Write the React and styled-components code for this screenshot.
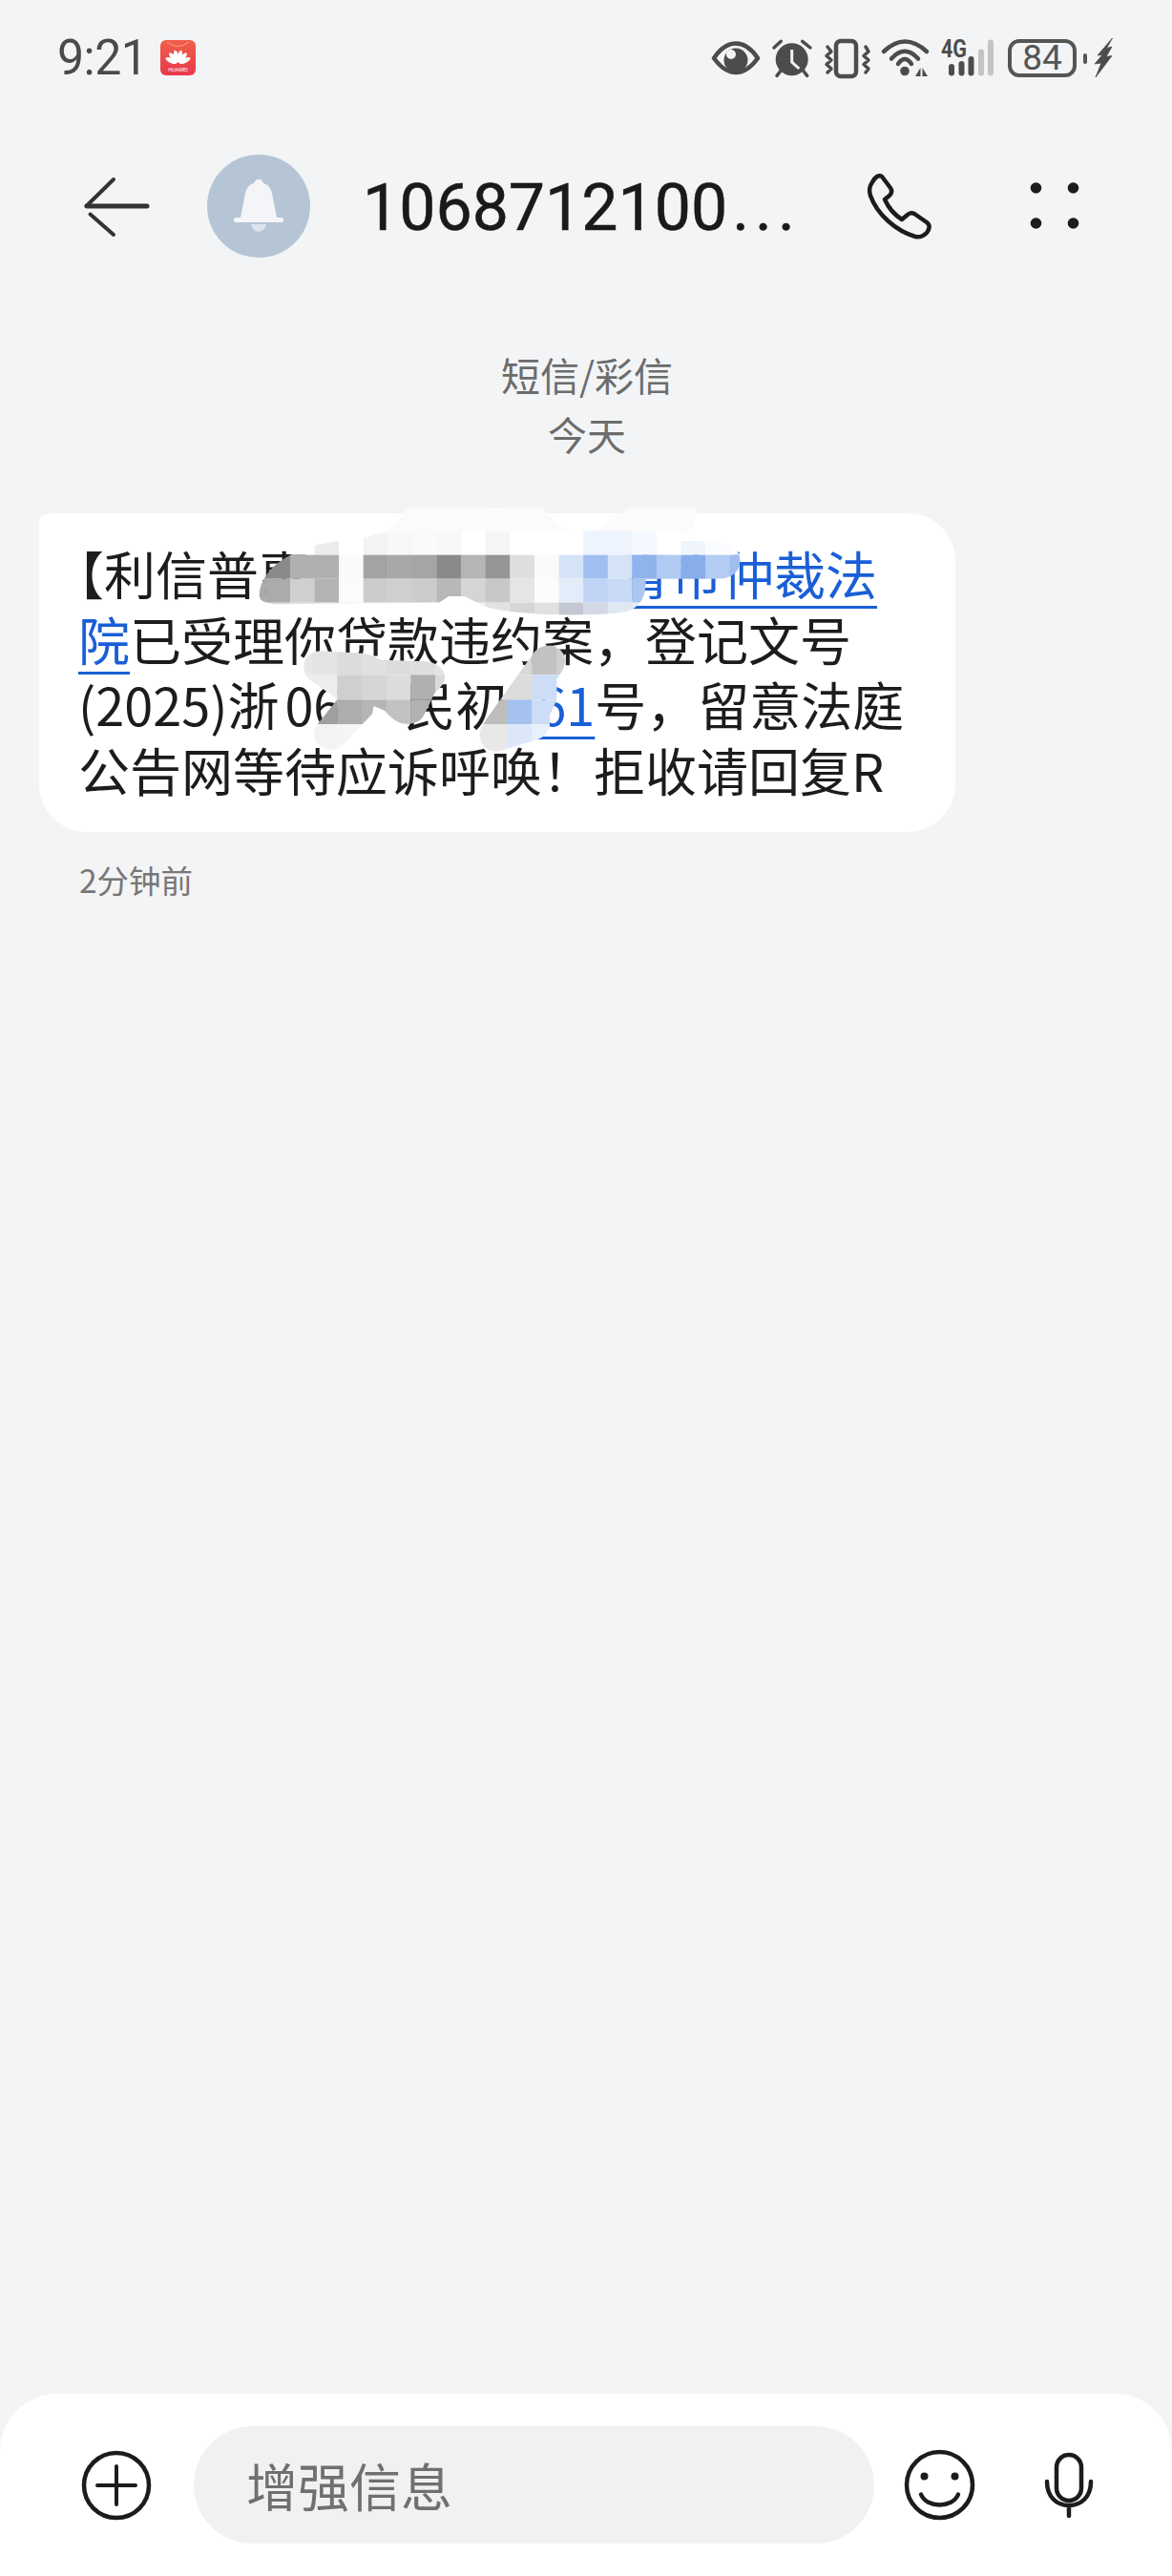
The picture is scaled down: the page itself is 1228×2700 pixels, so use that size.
import React from "react";
import styled, { createGlobalStyle } from "styled-components";

const Global = createGlobalStyle`
  html, body { margin: 0; padding: 0; background: #f3f4f6; }
  body { font-family: "Noto Sans CJK SC", "Noto Sans", sans-serif; }
`;
const Page = styled.div`
  width: 1228px; height: 2700px; display: flex; flex-direction: column;
  background: #f3f4f6; overflow: hidden;
`;
const StatusBar = styled.div`
  display: flex; align-items: center; height: 41px; padding: 40px 62px 0 60px;
`;
const Time = styled.span`
  font-family: Roboto, sans-serif; font-size: 50px; line-height: 41px; color: #4a4a4a;
  letter-spacing: -0.5px; width: 108px; transform: scaleY(1.04);
`;
const StatusIcons = styled.div`
  display: flex; align-items: center; gap: 12px; margin-left: auto;
`;
const Glyph = styled.svg`
  display: block; flex: none; overflow: visible;
`;
const BatteryGroup = styled.div`
  display: flex; align-items: center; gap: 9px; margin-left: 2px;
`;
const Battery = styled.div`
  position: relative; box-sizing: border-box; width: 72px; height: 40px; margin-right: 10px;
  border: 4px solid #555; border-radius: 12px; display: flex; align-items: center; justify-content: center;
  font-family: Roboto, sans-serif; font-size: 37px; line-height: 32px; color: #555;
  &::after {
    content: ""; position: absolute; right: -15px; top: 11px; width: 4px; height: 11px;
    background: #555; border-radius: 2px;
  }
`;
const Header = styled.header`
  display: flex; align-items: center; height: 108px; margin-top: 81px; padding-left: 85px;
`;
const Avatar = styled.div`
  width: 108px; height: 108px; border-radius: 50%; background: #b5c5d5; margin-left: 57px; flex: none;
  display: flex; align-items: center; justify-content: center;
`;
const Title = styled.h1`
  margin: 3px 0 0 55px; width: 529px; flex: none; font-family: Roboto, sans-serif; font-weight: 400;
  font-size: 68px; line-height: 108px; color: #1a1a1a; white-space: nowrap;
  -webkit-text-stroke: 0.5px #1a1a1a;
`;
const Dots = styled.span`
  letter-spacing: 6px; margin-left: 5px;
`;
const MoreGap = styled.div`
  margin-left: 103px;
`;
const Channel = styled.div`
  margin-top: 91px; text-align: center; font-size: 41px; line-height: 62px; color: #6c6c6c; padding-left: 2px;
`;
const Bubble = styled.div`
  position: relative; box-sizing: border-box; width: 960px; height: 334px; margin: 53px 0 0 41px;
  padding: 29px 0 0 41px; background: #fff; border-radius: 10px 50px 50px 50px;
  font-size: 54px; line-height: 68.7px; color: #1c1c1c;
`;
const Line = styled.div`
  white-space: nowrap;
`;
const Bracket = styled.span`
  margin-left: -27px;
`;
const Link = styled.span`
  color: #1a5fd6; text-decoration: underline; text-decoration-thickness: 3px;
  text-underline-offset: 11px; text-decoration-skip-ink: none;
`;
const Redacted = styled.span`
  display: inline-block; width: ${p => p.$w}px;
`;
const Smudge = styled.svg`
  position: absolute; left: ${p => p.$left}px; top: ${p => p.$top}px; display: block; overflow: visible;
`;
const Stamp = styled.div`
  margin: 30px 0 0 83px; font-size: 33.5px; line-height: 40px; color: #777;
`;
const Composer = styled.footer`
  margin-top: auto; height: 191px; box-sizing: border-box; padding-left: 85px; background: #fff;
  border-radius: 60px 60px 0 0; display: flex; align-items: center;
`;
const Input = styled.div`
  box-sizing: border-box; width: 713px; height: 123px; margin: 0 31px 0 44px; padding-left: 55px; flex: none;
  border-radius: 62px; background: #f1f1f1; display: flex; align-items: center;
  font-size: 54px; color: #707070;
`;
const MicSlot = styled.div`
  margin-left: 73px;
`;

const DARK = "#4c4c4c";
const EyeIcon = () => (
  <Glyph width="52" height="41" viewBox="0 0 52 41">
    <path d="M2 21C10 9 18 5.500 25 5.500S40 9 48 21C40 32 32 36 25 36S10 32 2 21Z" fill="none" stroke={DARK} strokeWidth="4.500" strokeLinejoin="round" />
    <circle cx="25" cy="23" r="12.500" fill={DARK} />
    <circle cx="20" cy="17" r="5" fill="#f3f4f6" />
  </Glyph>
);
const AlarmIcon = () => (
  <Glyph width="42" height="41" viewBox="0 0 42 41">
    <circle cx="19.700" cy="22.300" r="17" fill={DARK} />
    <path d="M19.700 12V25L27.300 32" fill="none" stroke="#f3f4f6" strokeWidth="3" />
    <path d="M1 10L8.300 3.300M30.700 3.300L39 10M4 39.300L9 33M35.700 39.300L30.700 33" stroke={DARK} strokeWidth="3.500" strokeLinecap="round" />
  </Glyph>
);
const VibrateIcon = () => (
  <Glyph width="48" height="41" viewBox="0 0 48 41">
    <rect x="12" y="3" width="21" height="37" rx="5" fill="none" stroke={DARK} strokeWidth="4.500" />
    <path d="M3 9L7 14L2 18.500L7 23L2 27.500L7 32L3 36M43 9L46 14L41 18.500L46 23L41 27.500L46 32L43 36" fill="none" stroke={DARK} strokeWidth="3.500" strokeLinejoin="round" strokeLinecap="round" />
  </Glyph>
);
const WifiIcon = () => (
  <Glyph width="50" height="41" viewBox="0 0 50 41">
    <path d="M2 14Q24 -7 47 14M10 21.500Q24 6 38 21.500M17 27Q24 17 31 27" fill="none" stroke={DARK} strokeWidth="4.500" strokeLinecap="round" />
    <circle cx="24" cy="34.500" r="4.800" fill={DARK} />
    <path d="M40.500 31V40L35 40ZM42.500 31V40L48 40Z" fill={DARK} />
  </Glyph>
);
const SignalIcon = () => (
  <Glyph width="56" height="41" viewBox="0 0 56 41">
    <text x="0" y="19.500" fontFamily="Roboto, sans-serif" fontWeight="700" fontSize="25" fill={DARK} textLength="27" lengthAdjust="spacingAndGlyphs">4G</text>
    <rect x="8" y="27" width="6" height="12.500" rx="3" fill={DARK} />
    <rect x="18.500" y="24" width="6" height="15.500" rx="3" fill={DARK} />
    <rect x="28.500" y="19" width="6" height="20.500" rx="3" fill={DARK} />
    <rect x="39" y="11.500" width="6" height="28" rx="3" fill="#c4c4c4" />
    <rect x="49" y="1.500" width="6" height="38" rx="3" fill="#c4c4c4" />
  </Glyph>
);
const BoltIcon = () => (
  <Glyph width="19" height="41" viewBox="0 0 19 41">
    <path d="M18.500 0L3 18L8 17.500L0 27L7 26L1 41L18 18.500L12 19.500L18 9L12.500 10.500Z" fill={DARK} stroke={DARK} strokeWidth="0.800" strokeLinejoin="round" />
  </Glyph>
);
const PETALS = [-64, -38, -13, 13, 38, 64];
const StoreIcon = () => (
  <Glyph width="37" height="37" viewBox="0 0 37 37" style={{ flex: "none" }}>
    <defs>
      <linearGradient id="store" x1="0" y1="0" x2="0" y2="1">
        <stop offset="0" stopColor="#f0604a" />
        <stop offset="1" stopColor="#e8384a" />
      </linearGradient>
    </defs>
    <rect width="37" height="37" rx="6" fill="url(#store)" />
    <path d="M7 2Q18.500 11 30 2" fill="none" stroke="#f8a58f" strokeWidth="1" />
    {PETALS.map(a => (
      <ellipse key={a} cx="18.500" cy="17" rx="2.400" ry="6.500" fill="#fff" transform={`rotate(${a} 18.500 25) `} />
    ))}
    <text x="18.500" y="33" textAnchor="middle" fontFamily="Roboto, sans-serif" fontSize="5.500" fill="#fff">HUAWEI</text>
  </Glyph>
);
const BackIcon = () => (
  <Glyph width="75" height="70" viewBox="0 0 75 70">
    <path d="M6 35H69" stroke="#333" strokeWidth="5" strokeLinecap="round" />
    <path d="M34 7L5.500 35M9.500 43.500L34 65" fill="none" stroke="#333" strokeWidth="4" strokeLinecap="round" />
  </Glyph>
);
const BellIcon = () => (
  <Glyph width="52" height="56" viewBox="0 0 52 56">
    <path d="M26 0C29 0 30 2 31 4C38 6 40 12 41 20L45 40H7L11 20C12 12 14 6 21 4C22 2 23 0 26 0Z" fill="#f3f5f8" />
    <rect x="0" y="40" width="52" height="5" rx="2.500" fill="#f3f5f8" />
    <path d="M18 47H34C33 52 29 55 26 55C23 55 19 52 18 47Z" fill="#dde4ed" />
  </Glyph>
);
const PhoneIcon = () => (
  <Glyph width="67" height="66" viewBox="0 0 67 66">
    <path d="M5 8C8 2 12 0 15 2L24 14C26 17 25 20 23 22L18 26C22 35 28 42 36 47L42 42C44 40 47 40 49 41L62 50C66 53 65 57 62 61C58 65 54 66 50 65C30 59 10 42 3 22C1 16 2 12 5 8Z" fill="none" stroke="#1c1c1c" strokeWidth="4.500" strokeLinejoin="round" />
  </Glyph>
);
const MoreIcon = () => (
  <Glyph width="52" height="50" viewBox="0 0 52 50">
    <circle cx="6.500" cy="6" r="5.800" fill="#1c1c1c" />
    <circle cx="45.500" cy="6" r="5.800" fill="#1c1c1c" />
    <circle cx="6.500" cy="43" r="5.800" fill="#1c1c1c" />
    <circle cx="45.500" cy="43" r="5.800" fill="#1c1c1c" />
  </Glyph>
);
const PlusIcon = () => (
  <Glyph width="74" height="74" viewBox="0 0 74 74" style={{ flex: "none" }}>
    <circle cx="37" cy="37" r="34" fill="none" stroke="#1c1c1c" strokeWidth="4.500" />
    <path d="M17 37H57M37 17V57" stroke="#1c1c1c" strokeWidth="4" strokeLinecap="round" />
  </Glyph>
);
const SmileIcon = () => (
  <Glyph width="75" height="75" viewBox="0 0 75 75" style={{ flex: "none" }}>
    <circle cx="37.500" cy="37.500" r="34.500" fill="none" stroke="#1c1c1c" strokeWidth="4.500" />
    <circle cx="21.500" cy="28.500" r="4" fill="#1c1c1c" />
    <circle cx="53.500" cy="28.500" r="4" fill="#1c1c1c" />
    <path d="M18 47.500C24 62 51 62 57 47.500" fill="none" stroke="#1c1c1c" strokeWidth="4.500" strokeLinecap="round" />
  </Glyph>
);
const MicIcon = () => (
  <Glyph width="50" height="68" viewBox="0 0 50 68">
    <rect x="12" y="2" width="26" height="48" rx="13" fill="none" stroke="#1c1c1c" strokeWidth="4.500" />
    <path d="M2 30C2 46 12 55 25 55C38 55 48 46 48 30M25 55V66" fill="none" stroke="#1c1c1c" strokeWidth="4.500" strokeLinecap="round" />
  </Glyph>
);

const MAIN_ROWS = [
  { y: 200, h: 75, c: ["#fff", "#fff", "#ececec", "#fff", "#f3f3f3", "#f8f8f8", "#fafafa", "#f8f8f8", "#fff", "#f5f5f5", "#fff", "#fff", "#fff", "#eef4fd", "#eef4fd", "#f5f8fe", "#fff", "#f0f5fd", "#fbfcff", "#fff"] },
  { y: 275, h: 75, c: ["#8a8a8a", "#b0b0b0", "#b0b0b0", "#fafafa", "#a3a3a3", "#a8a8a8", "#a5a5a5", "#8a8a8a", "#b5b5b5", "#959595", "#dedede", "#fafafa", "#d5e3f7", "#a0bff0", "#d5e3f7", "#8fb3ec", "#b0caf2", "#88adeb", "#b2ccf3", "#9fbeef"] },
  { y: 350, h: 75, c: ["#ababab", "#cfcfcf", "#b3b3b3", "#fbfbfb", "#cbcbcb", "#cfcfcf", "#cbcbcb", "#b8b8b8", "#d5d5d5", "#c8c8c8", "#e5e5e5", "#fcfcfc", "#e3edfa", "#c0d5f5", "#c8daf6", "#aac6f1"] },
  { y: 425, h: 75, c: ["#d5d5d5", "#e0e0e0", "#e8e8e8", "#f0f0f0", "#f0f0f0", "#f0f0f0", "#eeeeee", "#e8e8e8", "#eeeeee", "#e2e2e2", "#d5d5d5", "#e0e0e0", "#c3c8d3", "#d3d9e5", "#e0e8f4", "#e8eef9"] },
];
const A_ROWS = [
  { y: 90, h: 82, c: ["#e8e8e8", "#e3e3e3", "#dcdcdc", "#e0e0e0", "#dcdcdc", "#dedede", "#e4e4e4"] },
  { y: 172, h: 78, c: ["#eeeeee", "#ededed", "#cfcfcf", "#d6d6d6", "#dcdcdc", "#b0b0b0", "#dadada"] },
  { y: 250, h: 77, c: ["#a0a0a0", "#a0a0a0", "#adadad", "#b5b5b5", "#c2c2c2", "#b2b2b2", "#dadada"] },
  { y: 327, h: 90, c: ["#f3f3f3", "#f3f3f3", "#f5f5f5", "#fafafa", "#f5f5f5", "#f5f5f5", "#f5f5f5"] },
];
const B_ROWS = [
  { y: 60, h: 112, c: ["#e0e0e0", "#e0e0e0", "#d8d8d8", "#c2c2c2", "#cfcfcf"] },
  { y: 172, h: 78, c: ["#dedede", "#dedede", "#dcdcdc", "#cdddf7", "#cdddf7"] },
  { y: 250, h: 77, c: ["#bdbdbd", "#bdbdbd", "#a4c1f0", "#cdddf7", "#cdddf7"] },
  { y: 327, h: 90, c: ["#e8e8e8", "#e8e8e8", "#dce7f9", "#e8f0fb", "#e8f0fb"] },
];
const Cells = ({ rows, x0, step }) =>
  rows.map(row =>
    row.c.map((fill, i) => (
      <rect key={`${row.y}-${i}`} x={x0 + step * i} y={row.y} width={step + 1} height={row.h} fill={fill} />
    ))
  );

const TopMosaic = () => (
  <Smudge $left={219} $top={-48} width="520" height="170" viewBox="0 0 1560 510">
    <mask id="blobTop" maskUnits="userSpaceOnUse" x="0" y="0" width="1560" height="510">
      <path fill="#fff" d="M35 400C40 330 100 280 205 245L285 230L360 222L440 200L500 130L920 125L1000 200L1100 195L1200 125L1410 125L1400 190L1300 230L1480 232C1530 245 1560 270 1540 320C1520 350 1490 352 1440 352L1250 352C1250 400 1240 430 1200 450C1150 470 800 470 730 430L680 405L630 405L600 425L80 430C50 425 35 420 35 400Z" />
    </mask>
    <g mask="url(#blobTop)">
      <rect x="0" y="100" width="1560" height="100" fill="#fbfbfb" />
      <Cells rows={[{ y: 200, h: 230, c: ["#ababab"] }]} x0={0} step={55} />
      <Cells rows={MAIN_ROWS} x0={55} step={76.8} />
    </g>
  </Smudge>
);
const LowMosaic = () => (
  <Smudge $left={249} $top={112} width="360" height="160" viewBox="0 0 1080 480">
    <mask id="blobA" maskUnits="userSpaceOnUse" x="0" y="0" width="1080" height="480">
      <path fill="#fff" d="M85 145C85 115 110 97 140 97L280 105L330 125L470 130C510 135 530 160 528 182C525 205 505 220 497 228L462 300C450 322 420 330 395 325C380 322 360 310 340 285L305 270L300 295L205 395C185 412 145 412 125 385C112 365 118 340 130 325L190 250L130 205C100 190 85 170 85 145Z" />
    </mask>
    <mask id="blobB" maskUnits="userSpaceOnUse" x="0" y="0" width="1080" height="480">
      <path fill="#fff" d="M810 100C830 75 880 70 900 105C915 130 900 160 880 185L880 250L858 300C862 340 850 365 820 375L700 412C665 418 635 395 638 355C640 340 650 325 660 310Z" />
    </mask>
    <g mask="url(#blobA)">
      <Cells rows={A_ROWS} x0={36} step={77} />
    </g>
    <g mask="url(#blobB)">
      <Cells rows={B_ROWS} x0={571} step={77} />
    </g>
  </Smudge>
);

export default function App() {
  return (
    <Page>
      <Global />
      <StatusBar>
        <Time>9:21</Time>
        <StoreIcon />
        <StatusIcons>
          <EyeIcon />
          <AlarmIcon />
          <VibrateIcon />
          <WifiIcon />
          <SignalIcon />
          <BatteryGroup>
            <Battery>84</Battery>
            <BoltIcon />
          </BatteryGroup>
        </StatusIcons>
      </StatusBar>
      <Header>
        <BackIcon />
        <Avatar><BellIcon /></Avatar>
        <Title>1068712100<Dots>...</Dots></Title>
        <PhoneIcon />
        <MoreGap><MoreIcon /></MoreGap>
      </Header>
      <Channel>短信/彩信<br />今天</Channel>
      <Bubble>
        <Line><Bracket>【</Bracket>利信普惠<Redacted $w={324} /><Link>青市仲裁法</Link></Line>
        <Line><Link>院</Link>已受理你贷款违约案，登记文号</Line>
        <Line>(2025)浙<Redacted $w={6} />06<Redacted $w={65} />民初<Link><Redacted $w={32} />61</Link>号，留意法庭</Line>
        <Line>公告网等待应诉呼唤！拒收请回复R</Line>
        <TopMosaic />
        <LowMosaic />
      </Bubble>
      <Stamp>2分钟前</Stamp>
      <Composer>
        <PlusIcon />
        <Input>增强信息</Input>
        <SmileIcon />
        <MicSlot><MicIcon /></MicSlot>
      </Composer>
    </Page>
  );
}
